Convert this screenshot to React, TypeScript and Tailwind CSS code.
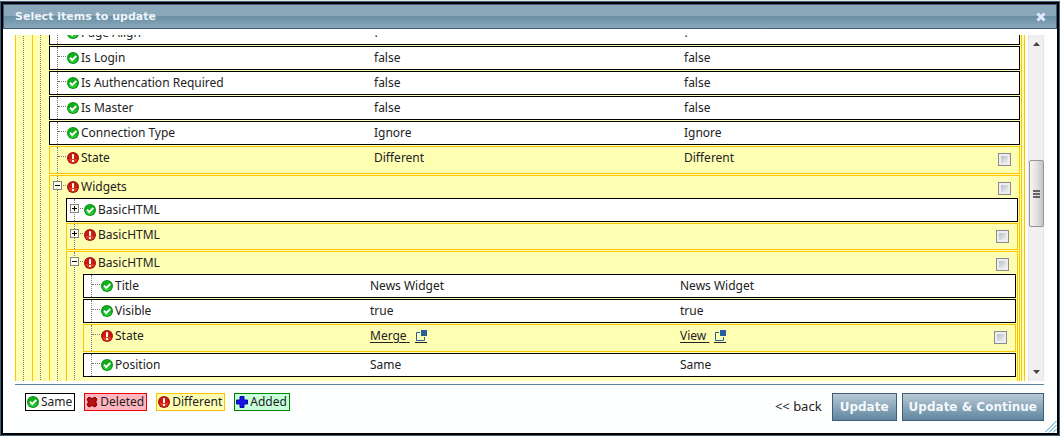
import { useLayoutEffect, useRef, type ReactNode } from "react";

type Status = "same" | "deleted" | "different" | "added";

function StatusIcon({ status }: { status: Status }) {
  return (
    <svg viewBox="0 0 12 12" className="size-3 shrink-0" aria-hidden="true">
      {status === "same" && (
        <>
          <circle cx="6" cy="6" r="6" fill="#0b8f16" />
          <circle cx="6" cy="6" r="5" fill="#0fae1a" />
          <path d="M1.5 7 A4.6 4.6 0 0 0 10.5 7 L6 9.5 Z" fill="#2bd033" />
          <path d="M3 5.6 L5.3 8 L9.3 4" fill="none" stroke="#fff" strokeWidth="2" />
        </>
      )}
      {status === "different" && (
        <>
          <circle cx="6" cy="6" r="6" fill="#a3140c" />
          <circle cx="6" cy="6" r="4.8" fill="#cc1c10" />
          <path d="M1.5 7 A4.6 4.6 0 0 0 10.5 7 Z" fill="#e03a20" />
          <rect x="5" y="2" width="2" height="5" rx="0.6" fill="#fff" />
          <rect x="5" y="8" width="2" height="2" fill="#fff" />
        </>
      )}
      {status === "deleted" && (
        <>
          <path d="M1 3 L3 1 L6 2.6 L9 1 L11 3 L9.8 6 L11 9 L9 11 L6 9.6 L3 11 L1 9 L2.4 6 Z" fill="#8d0b0b" stroke="#8d0b0b" />
          <path d="M3 3 L9 9 M9 3 L3 9" stroke="#c01212" strokeWidth="2.6" />
        </>
      )}
      {status === "added" && (
        <path d="M4 .5 H8 V4 H11.5 V8 H8 V11.5 H4 V8 H.5 V4 H4 Z" fill="#1414e8" stroke="#0a0aa8" />
      )}
    </svg>
  );
}

function PopOutIcon() {
  return (
    <svg viewBox="0 0 12 12" className="size-3" aria-hidden="true">
      <path d="M5 2.5 H1.5 V10.5 H9.5 V7" fill="none" stroke="#265f9c" />
      <rect x="6" y="0" width="6" height="6" fill="#265f9c" />
    </svg>
  );
}

const boxes = {
  same: "border-black bg-white",
  different: "border-[#ffc600] bg-[#ffffb4]",
  deleted: "border-[#f00000] bg-[#ffb6c1]",
  added: "border-[#008000] bg-[#c6ffd8]",
};

interface NodeProps {
  status: Status;
  label: string;
  left?: ReactNode;
  right?: ReactNode;
  toggle?: "+" | "-";
  size?: string;
  children?: ReactNode;
}

function TreeNode({ status, label, left, right, toggle, size = "h-[22px]", children }: NodeProps) {
  return (
    <li className={`relative border ${boxes[status]}`}>
      <span className="absolute inset-y-0 left-[7px] border-l border-dotted border-[#777]" />
      <div className={`relative flex items-start ${size}`}>
        <span className="absolute left-2 top-[9px] w-2 border-t border-dotted border-[#777]" />
        {toggle && (
          <button
            type="button"
            aria-label={`${toggle === "+" ? "Expand" : "Collapse"} ${label}`}
            className="absolute left-[3px] top-[5px] size-[9px] border border-[#848484] bg-[#fffff0]"
          >
            <svg viewBox="0 0 7 7" className="block size-[7px]" aria-hidden="true">
              <path d={toggle === "+" ? "M1 3.5 H6 M3.5 1 V6" : "M1 3.5 H6"} stroke="#000" />
            </svg>
          </button>
        )}
        <div className="flex h-[22px] min-w-0 flex-1 items-center gap-0.5 pl-[17px]">
          <StatusIcon status={status} />
          <span className="whitespace-nowrap">{label}</span>
        </div>
        <div className="flex h-[22px] w-[310px] items-center">{left}</div>
        <div className="flex h-[22px] w-[335px] items-center">
          {right}
          {status === "different" && (
            <input
              type="checkbox"
              aria-label={`Select ${label}`}
              className="ml-auto mr-2 mt-[3px] size-[13px] appearance-none border border-[#8a8b90] bg-linear-to-br from-[#a9b1ba] to-white shadow-[inset_0_0_0_2px_#eeeeee] checked:bg-[#4b7a99]"
            />
          )}
        </div>
      </div>
      {children && <ul className="grid gap-px pl-4 pr-px">{children}</ul>}
    </li>
  );
}

function Branch({ children, inner }: { children: ReactNode; inner: string }) {
  return (
    <div className="relative border border-[#ffc600] bg-[#ffffb4]">
      <span className="absolute inset-y-0 left-[7px] border-l border-dotted border-[#777]" />
      <div className={inner}>{children}</div>
    </div>
  );
}

function OpenLink({ children }: { children: ReactNode }) {
  return (
    <a href="#open" className="flex items-center gap-[5px]">
      <span className="whitespace-pre underline underline-offset-2">{children} </span>
      <span className="border-b border-[#222]">
        <PopOutIcon />
      </span>
    </a>
  );
}

function ScrollBar() {
  return (
    <div className="flex w-4 shrink-0 flex-col items-center border-x border-[#e6e6e6] bg-[#f0f0f0] py-[7px]">
      <svg viewBox="0 0 7 4" className="h-1 w-[7px] shrink-0" aria-hidden="true">
        <path d="M0 4 L3.5 0 L7 4 Z" fill="#444" />
      </svg>
      <div className="min-h-0 flex-[114]" />
      <div className="flex h-[67px] w-[15px] shrink-0 flex-col items-center justify-center gap-px rounded-xs border border-[#959595] bg-linear-to-r from-[#f6f6f6] via-[#e2e2e4] to-[#c4c4ca]">
        <span className="h-0.5 w-[7px] bg-[#666]" />
        <span className="h-0.5 w-[7px] bg-[#666]" />
        <span className="h-0.5 w-[7px] bg-[#666]" />
      </div>
      <div className="min-h-0 flex-[143]" />
      <svg viewBox="0 0 7 4" className="h-1 w-[7px] shrink-0" aria-hidden="true">
        <path d="M0 0 L3.5 4 L7 0 Z" fill="#444" />
      </svg>
    </div>
  );
}

const legend: { status: Status; label: string }[] = [
  { status: "same", label: "Same" },
  { status: "deleted", label: "Deleted" },
  { status: "different", label: "Different" },
  { status: "added", label: "Added" },
];

const action =
  "h-7 min-w-[65px] border border-[#3d5c78] bg-linear-to-b from-[#b9c9d5] to-[#5f87a0] px-1.5 font-['DejaVu_Sans'] text-xs font-bold text-[#f4f8fb]";

export default function App() {
  const pane = useRef<HTMLDivElement>(null);
  useLayoutEffect(() => {
    if (pane.current) pane.current.scrollTop = 16;
  }, []);

  return (
    <div className="flex h-screen flex-col bg-[#e4e7e8] pt-px font-['Noto_Sans','Open_Sans',sans-serif] text-xs text-[#222]">
      <div className="flex min-h-0 flex-1 flex-col border border-[#3f607d] bg-black p-0.5">
        <section role="dialog" aria-labelledby="title" className="relative flex min-h-0 flex-1 flex-col bg-[#fdfefe]">
          <header className="flex h-[25px] shrink-0 items-center justify-between border border-[#3d5c78] bg-linear-to-b from-[#8ba8ba] from-50% via-[#6a90a6] via-50% to-[#8ba8ba] pl-[11px] pr-2.5">
            <h1 id="title" className="pt-0.5 font-['DejaVu_Sans'] text-[11px] font-bold text-[#f0f5f9]">Select items to update</h1>
            <button type="button" aria-label="Close">
              <svg viewBox="0 0 10 10" className="size-2.5" aria-hidden="true">
                <path d="M1.5 1.5 L8.5 8.5 M8.5 1.5 L1.5 8.5" stroke="#e2eaff" strokeWidth="3" />
              </svg>
            </button>
          </header>

          <div className="mt-1.5 flex min-h-0 flex-1 pl-3 pr-[13px]">
            <div ref={pane} className="min-w-0 flex-1 overflow-hidden">
              <Branch inner="pl-4 pr-0.5">
                <Branch inner="pl-4 pr-px">
                  <ul className="grid gap-px pb-10">
                    <TreeNode status="same" label="Page Align" left="?" right="?" />
                    <TreeNode status="same" label="Is Login" left="false" right="false" />
                    <TreeNode status="same" label="Is Authencation Required" left="false" right="false" />
                    <TreeNode status="same" label="Is Master" left="false" right="false" />
                    <TreeNode status="same" label="Connection Type" left="Ignore" right="Ignore" />
                    <TreeNode status="different" label="State" left="Different" right="Different" size="h-[26px]" />
                    <TreeNode status="different" label="Widgets" toggle="-">
                      <TreeNode status="same" label="BasicHTML" toggle="+" />
                      <TreeNode status="different" label="BasicHTML" toggle="+" size="h-[25px]" />
                      <TreeNode status="different" label="BasicHTML" toggle="-">
                        <TreeNode status="same" label="Title" left="News Widget" right="News Widget" />
                        <TreeNode status="same" label="Visible" left="true" right="true" />
                        <TreeNode
                          status="different"
                          label="State"
                          left={<OpenLink>Merge</OpenLink>}
                          right={<OpenLink>View</OpenLink>}
                          size="h-[26px]"
                        />
                        <TreeNode status="same" label="Position" left="Same" right="Same" />
                        <li className="h-6" aria-hidden="true" />
                      </TreeNode>
                    </TreeNode>
                  </ul>
                </Branch>
              </Branch>
            </div>
            <div className="flex pl-[3px]">
              <ScrollBar />
            </div>
          </div>

          <footer className="ml-3 mr-[13px] mt-[3px] flex h-[49px] shrink-0 items-start justify-between border-t border-[#5b84a0] pl-2.5 pt-2">
            <ul className="flex gap-[9px]">
              {legend.map(({ status, label }) => (
                <li key={status} className={`flex h-[18px] items-center gap-0.5 border pl-px pr-0.5 ${boxes[status]}`}>
                  <StatusIcon status={status} />
                  {label}
                </li>
              ))}
            </ul>
            <div className="flex items-center gap-[5px]">
              <a href="#back" className="mr-[5px] text-[13px]">&lt;&lt; back</a>
              <button type="button" className={action}>Update</button>
              <button type="button" className={action}>Update &amp; Continue</button>
            </div>
          </footer>

          <svg viewBox="0 0 12 12" className="absolute bottom-0 right-0 size-3 cursor-se-resize" aria-hidden="true">
            <path d="M0 11.5 L11.5 0 M4 11.5 L11.5 4 M8 11.5 L11.5 8" stroke="#3f94d0" />
          </svg>
        </section>
      </div>
    </div>
  );
}
